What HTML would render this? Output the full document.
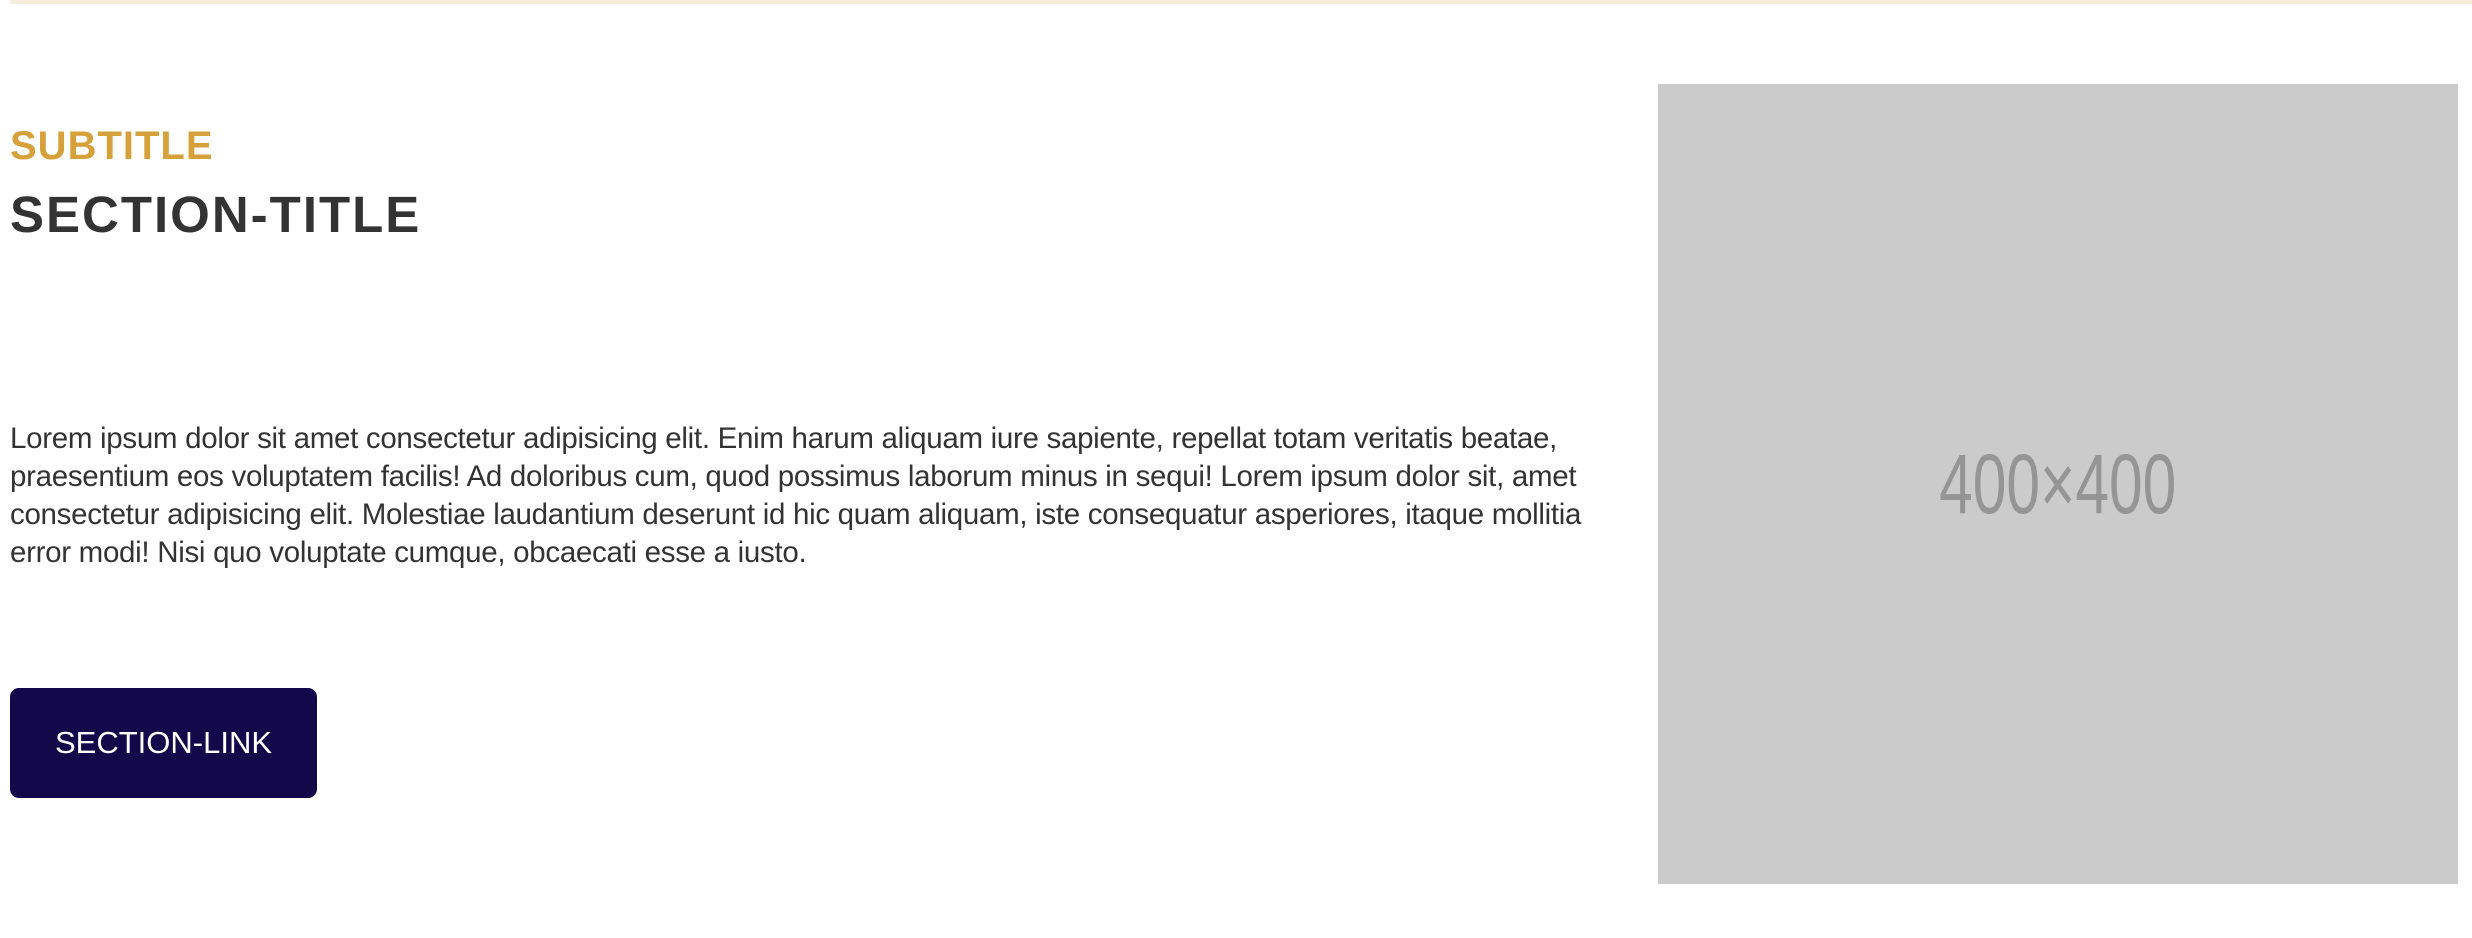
<!DOCTYPE html>
<html><head><meta charset="utf-8"><style>
html,body{margin:0;padding:0;background:#fff;width:2472px;height:938px;overflow:hidden;position:relative;font-family:"Liberation Sans",sans-serif}
.bar{position:absolute;left:10px;right:0;top:0;height:4px;background:#f6ecdc}
.sub{position:absolute;left:10px;top:126px;font-size:40px;line-height:40px;font-weight:bold;color:#d6a03b;letter-spacing:1px}
.title{position:absolute;left:10px;top:189px;font-size:51px;line-height:51px;font-weight:bold;color:#333;letter-spacing:2px}
.p{position:absolute;left:10px;top:420px;font-size:29.5px;line-height:38px;color:#333;white-space:nowrap;letter-spacing:-0.3px}
.btn{position:absolute;left:10px;top:688px;width:307px;height:110px;background:#12084a;border-radius:9px;color:#fff;font-size:31px;display:flex;align-items:center;justify-content:center}
.img{position:absolute;left:1658px;top:84px;width:800px;height:800px;background:#cbcbcb;display:flex;align-items:center;justify-content:center}
.img span{font-size:84px;color:#959595;transform:scaleX(0.72);display:inline-block}
</style></head><body>
<div class="bar"></div>
<div class="sub">SUBTITLE</div>
<div class="title">SECTION-TITLE</div>
<div class="p">Lorem ipsum dolor sit amet consectetur adipisicing elit. Enim harum aliquam iure sapiente, repellat totam veritatis beatae,<br>praesentium eos voluptatem facilis! Ad doloribus cum, quod possimus laborum minus in sequi! Lorem ipsum dolor sit, amet<br>consectetur adipisicing elit. Molestiae laudantium deserunt id hic quam aliquam, iste consequatur asperiores, itaque mollitia<br>error modi! Nisi quo voluptate cumque, obcaecati esse a iusto.</div>
<div class="btn">SECTION-LINK</div>
<div class="img"><span>400×400</span></div>
</body></html>
